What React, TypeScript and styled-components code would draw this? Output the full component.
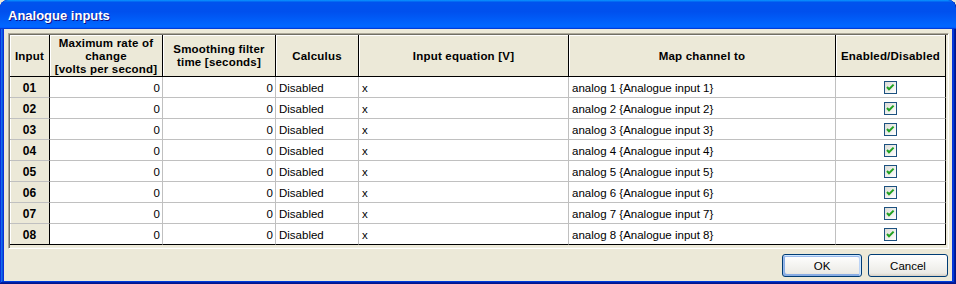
import styled, { createGlobalStyle } from 'styled-components';

const GlobalStyle = createGlobalStyle`
  html, body {
    margin: 0;
    padding: 0;
    background: #ece9d8;
  }
  * {
    box-sizing: border-box;
  }
`;

const COLUMNS = [40, 113, 113, 83, 210, 267, 110];

const HEADERS: string[][] = [
  ['Input'],
  ['Maximum rate of', 'change', '[volts per second]'],
  ['Smoothing filter', 'time [seconds]'],
  ['Calculus'],
  ['Input equation [V]'],
  ['Map channel to'],
  ['Enabled/Disabled'],
];

interface InputRow {
  id: string;
  maxRate: number;
  smoothing: number;
  calculus: string;
  equation: string;
  channel: string;
  enabled: boolean;
}

const rows: InputRow[] = Array.from({ length: 8 }, (_, i) => ({
  id: `0${i + 1}`,
  maxRate: 0,
  smoothing: 0,
  calculus: 'Disabled',
  equation: 'x',
  channel: `analog ${i + 1} {Analogue input ${i + 1}}`,
  enabled: true,
}));

export default function App() {
  return (
    <>
      <GlobalStyle />
      <Window>
        <TitleBar>
          <TitleText>Analogue inputs</TitleText>
        </TitleBar>
        <DialogBody>
          <GridFrame>
            <Grid>
              {HEADERS.map((lines, idx) => (
                <HeaderCell key={`h-${idx}`}>
                  {lines.map((line, li) => (
                    <span key={li}>{line}</span>
                  ))}
                </HeaderCell>
              ))}
              {rows.map((row) => (
                <RowFragment key={row.id} row={row} />
              ))}
            </Grid>
          </GridFrame>
          <ButtonBar>
            <DialogButton $default>OK</DialogButton>
            <DialogButton>Cancel</DialogButton>
          </ButtonBar>
        </DialogBody>
      </Window>
    </>
  );
}

function RowFragment({ row }: { row: InputRow }) {
  return (
    <>
      <RowHeader>{row.id}</RowHeader>
      <Cell $align="right">{row.maxRate}</Cell>
      <Cell $align="right">{row.smoothing}</Cell>
      <Cell>{row.calculus}</Cell>
      <Cell>{row.equation}</Cell>
      <Cell>{row.channel}</Cell>
      <Cell $align="center" $last>
        <CheckBox>
          {row.enabled && (
            <svg width="11" height="11" viewBox="0 0 11 11">
              <path d="M2 5 L4 7.2 L8.6 2.6" fill="none" stroke="#21a121" strokeWidth="2" />
            </svg>
          )}
        </CheckBox>
      </Cell>
    </>
  );
}

const Window = styled.div`
  width: 956px;
  height: 284px;
  display: flex;
  flex-direction: column;
  background: #0831d9;
  border-radius: 8px 8px 0 0;
  padding: 0 4px 3px 4px;
  box-shadow: inset -1px -1px #00138c, inset 1px 1px #0831d9, inset -2px -2px #001ea0,
    inset 2px 2px #166aee, inset -3px -3px #003bda, inset 3px 3px #0855dd;
  overflow: hidden;
`;

const TitleBar = styled.div`
  height: 29px;
  margin: 0 -4px;
  padding: 1px 8px 0 8px;
  display: flex;
  align-items: center;
  border-radius: 8px 8px 0 0;
  background: linear-gradient(
    180deg,
    #0997ff,
    #0053ee 8%,
    #0050ee 40%,
    #06f 88%,
    #06f 93%,
    #005bff 95%,
    #003dd7 96%,
    #003dd7
  );
`;

const TitleText = styled.div`
  font-family: 'Liberation Sans', Arial, sans-serif;
  font-weight: bold;
  font-size: 13px;
  color: #fff;
  text-shadow: 1px 1px #0f1089;
`;

const DialogBody = styled.div`
  flex: 1;
  background: #ece9d8;
  padding: 4px 3px 4px 4px;
  display: flex;
  flex-direction: column;
  font-family: 'Liberation Sans', Arial, sans-serif;
  font-size: 11.5px;
  color: #000;
`;

const GridFrame = styled.div`
  height: 216px;
  border-style: solid;
  border-width: 1px;
  border-color: #aca899 #fff #fff #aca899;
  box-shadow: inset 1px 1px #716f64, inset -1px -1px #f1efe2;
  padding: 1px;
  background: #ece9d8;
`;

const Grid = styled.div`
  display: grid;
  grid-template-columns: ${COLUMNS.map((w) => `${w}px`).join(' ')};
  grid-template-rows: 42px repeat(8, 21px);
  width: ${COLUMNS.reduce((a, b) => a + b, 0)}px;
`;

const HeaderCell = styled.div`
  display: flex;
  flex-direction: column;
  align-items: center;
  justify-content: center;
  background: #ece9d8;
  border-right: 1px solid #000;
  border-bottom: 1px solid #000;
  box-shadow: inset 1px 1px #fff;
  font-weight: bold;
  font-size: 11.5px;
  letter-spacing: 0.2px;
  line-height: 13px;
  text-align: center;
  white-space: nowrap;
  padding-top: 1px;
`;

const RowHeader = styled.div`
  display: flex;
  align-items: center;
  justify-content: center;
  background: #ece9d8;
  border-right: 1px solid #000;
  border-bottom: 1px solid #c0c0c0;
  box-shadow: inset 1px 0 #fff;
  font-weight: bold;
  font-size: 12px;
  padding-top: 1px;

  &:nth-last-child(7) {
    border-bottom-color: #000;
  }
`;

const Cell = styled.div<{ $align?: 'left' | 'right' | 'center'; $last?: boolean }>`
  display: flex;
  align-items: center;
  justify-content: ${({ $align }) =>
    $align === 'right' ? 'flex-end' : $align === 'center' ? 'center' : 'flex-start'};
  padding: 1px ${({ $align }) => ($align === 'right' ? '2px' : '3px')} 0;
  background: #fff;
  border-right: 1px solid ${({ $last }) => ($last ? '#000' : '#c0c0c0')};
  border-bottom: 1px solid #c0c0c0;
  white-space: nowrap;
  overflow: hidden;

  &:nth-last-child(-n + 6) {
    border-bottom-color: #000;
  }
`;

const CheckBox = styled.div`
  width: 13px;
  height: 13px;
  margin-top: -1px;
  border: 1px solid #1c5180;
  background: linear-gradient(135deg, #dcdcd7, #fff);
  display: flex;
  align-items: center;
  justify-content: center;
`;

const ButtonBar = styled.div`
  margin-top: 5px;
  display: flex;
  justify-content: flex-end;
  gap: 6px;
  padding-right: 1px;
`;

const DialogButton = styled.button<{ $default?: boolean }>`
  width: 80px;
  height: 23px;
  padding: 0;
  font-family: 'Liberation Sans', Arial, sans-serif;
  font-size: 11.5px;
  color: #000;
  border: 1px solid #003c74;
  border-radius: 3px;
  background: linear-gradient(180deg, #fff, #ecebe6 86%, #d6d0c5);
  box-shadow: ${({ $default }) =>
    $default
      ? 'inset -1px 1px #cee7ff, inset 1px 2px #98b8ea, inset -2px 2px #bcd4f6, inset 1px -1px #89ade4, inset 2px -2px #89ade4'
      : 'none'};
`;
